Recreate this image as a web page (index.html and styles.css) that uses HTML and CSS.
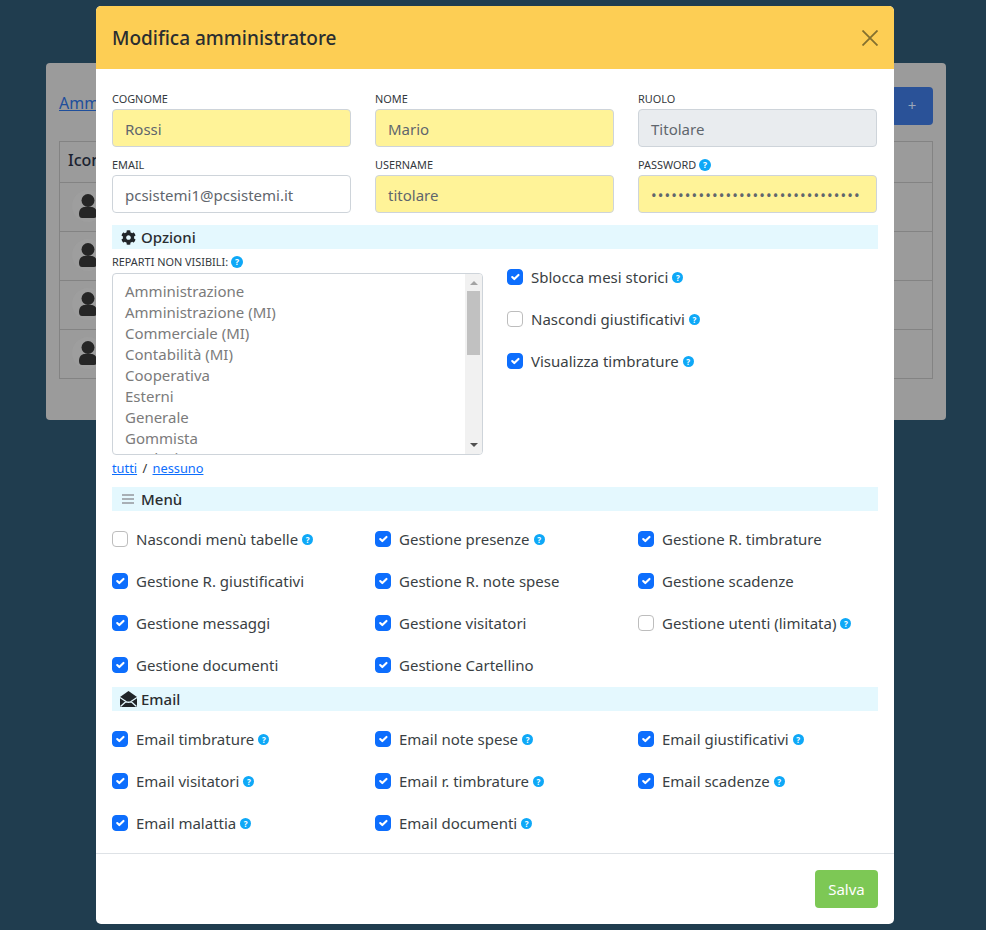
FILE: index.html
```html
<!DOCTYPE html>
<html lang="it">
<head>
<meta charset="utf-8">
<title>Modifica amministratore</title>
<link rel="stylesheet" href="styles.css">
</head>
<body>
<main class="card">
  <div class="card-top">
    <a class="crumb" href="#">Amministratori</a>
    <span class="add-btn">+</span>
  </div>
  <div class="table">
    <div class="tr th"><span>Icona</span></div>
    <div class="tr"><span class="avatar"><svg viewBox="0 0 18 24"><circle cx="9" cy="6.500" r="6.500"/><path d="M0 20c0-4.500 2.500-7 6-7h6c3.500 0 6 2.500 6 7 0 2.500-1 4-3 4H3c-2 0-3-1.500-3-4z"/></svg></span></div>
    <div class="tr"><span class="avatar"><svg viewBox="0 0 18 24"><circle cx="9" cy="6.500" r="6.500"/><path d="M0 20c0-4.500 2.500-7 6-7h6c3.500 0 6 2.500 6 7 0 2.500-1 4-3 4H3c-2 0-3-1.500-3-4z"/></svg></span></div>
    <div class="tr"><span class="avatar"><svg viewBox="0 0 18 24"><circle cx="9" cy="6.500" r="6.500"/><path d="M0 20c0-4.500 2.500-7 6-7h6c3.500 0 6 2.500 6 7 0 2.500-1 4-3 4H3c-2 0-3-1.500-3-4z"/></svg></span></div>
    <div class="tr"><span class="avatar"><svg viewBox="0 0 18 24"><circle cx="9" cy="6.500" r="6.500"/><path d="M0 20c0-4.500 2.500-7 6-7h6c3.500 0 6 2.500 6 7 0 2.500-1 4-3 4H3c-2 0-3-1.500-3-4z"/></svg></span></div>
  </div>
</main>

<section class="modal">
  <header class="modal-head">
    <h1>Modifica amministratore</h1>
    <svg class="close" viewBox="0 0 16 16"><path d="M0.500 0.500L15.500 15.500M15.500 0.500L0.500 15.500"/></svg>
  </header>
  <div class="modal-body">
    <div class="fields">
      <div class="field"><label>COGNOME</label><div class="input req">Rossi</div></div>
      <div class="field"><label>NOME</label><div class="input req">Mario</div></div>
      <div class="field"><label>RUOLO</label><div class="input off">Titolare</div></div>
      <div class="field"><label>EMAIL</label><div class="input">pcsistemi1@pcsistemi.it</div></div>
      <div class="field"><label>USERNAME</label><div class="input req">titolare</div></div>
      <div class="field"><label>PASSWORD <i class="help">?</i></label><div class="input req dots">•••••••••••••••••••••••••••••••</div></div>
    </div>

    <h2 class="bar"><svg class="bar-ico" viewBox="0 0 512 512"><path d="M487.4 315.7l-42.6-24.6c4.3-23.2 4.3-47 0-70.2l42.6-24.6c4.9-2.8 7.1-8.6 5.500-14-11.100-35.600-30-67.800-54.700-94.600-3.800-4.100-10-5.100-14.800-2.300L380.800 110c-17.900-15.400-38.500-27.300-60.800-35.100V25.800c0-5.600-3.900-10.500-9.400-11.700-36.700-8.200-74.300-7.800-109.200 0-5.500 1.200-9.400 6.100-9.400 11.700V75c-22.200 7.900-42.800 19.800-60.800 35.100L88.700 85.500c-4.900-2.800-11-1.900-14.800 2.300-24.700 26.700-43.600 58.900-54.700 94.600-1.700 5.400.6 11.200 5.500 14L67.300 221c-4.300 23.200-4.300 47 0 70.200l-42.600 24.600c-4.900 2.800-7.100 8.600-5.500 14 11.100 35.600 30 67.800 54.700 94.600 3.800 4.100 10 5.100 14.800 2.300l42.600-24.600c17.900 15.400 38.500 27.300 60.800 35.100v49.200c0 5.600 3.900 10.500 9.400 11.700 36.700 8.200 74.300 7.800 109.200 0 5.500-1.200 9.400-6.100 9.400-11.700v-49.200c22.200-7.900 42.800-19.800 60.800-35.100l42.600 24.600c4.900 2.800 11 1.900 14.800-2.300 24.700-26.700 43.600-58.900 54.700-94.600 1.500-5.500-.7-11.300-5.600-14.100zM256 336c-44.100 0-80-35.900-80-80s35.900-80 80-80 80 35.900 80 80-35.900 80-80 80z"/></svg>Opzioni</h2>

    <div class="options">
      <div class="opt-left">
        <label class="small">REPARTI NON VISIBILI: <i class="help">?</i></label>
        <div class="listbox">
          <ul>
            <li>Amministrazione</li>
            <li>Amministrazione (MI)</li>
            <li>Commerciale (MI)</li>
            <li>Contabilità (MI)</li>
            <li>Cooperativa</li>
            <li>Esterni</li>
            <li>Generale</li>
            <li>Gommista</li>
            <li>Produzione</li>
          </ul>
          <div class="scroll"><span class="arrow up"></span><span class="thumb"></span><span class="arrow down"></span></div>
        </div>
        <div class="links"><a href="#">tutti</a> / <a href="#">nessuno</a></div>
      </div>
      <div class="opt-right">
        <div class="check on">Sblocca mesi storici <i class="help">?</i></div>
        <div class="check">Nascondi giustificativi <i class="help">?</i></div>
        <div class="check on">Visualizza timbrature <i class="help">?</i></div>
      </div>
    </div>

    <h2 class="bar"><svg class="bar-ico bars" viewBox="0 0 12 10"><path d="M0 1h12M0 5h12M0 9h12"/></svg>Menù</h2>
    <div class="checks menu">
      <div class="check">Nascondi menù tabelle <i class="help">?</i></div>
      <div class="check on">Gestione presenze <i class="help">?</i></div>
      <div class="check on">Gestione R. timbrature</div>
      <div class="check on">Gestione R. giustificativi</div>
      <div class="check on">Gestione R. note spese</div>
      <div class="check on">Gestione scadenze</div>
      <div class="check on">Gestione messaggi</div>
      <div class="check on">Gestione visitatori</div>
      <div class="check">Gestione utenti (limitata) <i class="help">?</i></div>
      <div class="check on">Gestione documenti</div>
      <div class="check on">Gestione Cartellino</div>
    </div>

    <h2 class="bar"><svg class="bar-ico env" viewBox="0 0 17 16"><path d="M0 6L8.500 0L17 6V16H0z"/><path class="env-cut" d="M0 6.500L6 10.500Q8.500 12 11 10.500L17 6.500M0.500 15.500L6 10.500M16.500 15.500L11 10.500"/></svg>Email</h2>
    <div class="checks mail">
      <div class="check on">Email timbrature <i class="help">?</i></div>
      <div class="check on">Email note spese <i class="help">?</i></div>
      <div class="check on">Email giustificativi <i class="help">?</i></div>
      <div class="check on">Email visitatori <i class="help">?</i></div>
      <div class="check on">Email r. timbrature <i class="help">?</i></div>
      <div class="check on">Email scadenze <i class="help">?</i></div>
      <div class="check on">Email malattia <i class="help">?</i></div>
      <div class="check on">Email documenti <i class="help">?</i></div>
    </div>
  </div>
  <footer class="modal-foot"><span class="save">Salva</span></footer>
</section>
</body>
</html>
```

FILE: styles.css
```css
*, *::before { box-sizing: border-box; }
html, body { margin: 0; height: 930px; overflow: hidden; }
body {
  background: #203d4f;
  font-family: "Noto Sans", "Open Sans", sans-serif;
  color: #212529;
  padding: 63px 40px 0 46px;
}
.card {
  width: 900px;
  height: 357px;
  background: #9b9b9b;
  border-radius: 4px;
  padding: 24px 13px;
}
.card-top { display: flex; justify-content: space-between; height: 54px; }
.crumb { color: #1f4f9c; font-size: 16px; line-height: 32px; }
.add-btn {
  width: 42px; height: 38px; background: #2a5298; border-radius: 4px;
  color: #9aa6b8; text-align: center; line-height: 36px; font-size: 15px;
}
.table { border: 1px solid #838383; border-bottom: 0; }
.tr { height: 49px; border-bottom: 1px solid #838383; padding: 7px 12px; }
.th { height: 41px; padding: 7px 8px; font-weight: 500; font-size: 16px; color: #1a2230; }
.avatar {
  display: flex; align-items: center; justify-content: center;
  width: 32px; height: 32px; border-radius: 50%; background: #9e9e9e;
}
.avatar svg { display: block; width: 18px; height: 24px; fill: #262626; }

.modal {
  position: absolute;
  left: 96px; top: 6px;
  width: 798px; height: 918px;
  background: #fff;
  border-radius: 5px;
  overflow: hidden;
  display: flex;
  flex-direction: column;
}
.modal-head {
  height: 63px; background: #fdce54;
  display: flex; align-items: center; justify-content: space-between;
  padding: 0 16px;
}
.modal-head h1 { margin: 0; font-size: 19px; font-weight: 500; color: #2a2d30; }
.close { width: 16px; height: 16px; stroke: #83702f; stroke-width: 1.800; fill: none; }
.modal-body { flex: 1; padding: 21px 16px 0; }
.fields { display: grid; grid-template-columns: repeat(3, 239px); column-gap: 24px; row-gap: 9px; }
.field label, .small { display: block; height: 19px; font-size: 10.900px; line-height: 17px; color: #33383d; white-space: nowrap; }
.field .help, .small .help { width: 12px; height: 12px; line-height: 12px; font-size: 8.500px; }
.input {
  height: 38px; border: 1px solid #ced4da; border-radius: 4px;
  padding: 1px 12px 0; font-size: 15px; line-height: 36px; color: #5f666d;
}
.req { background: #fff398; }
.off { background: #e9ecef; }
.dots { letter-spacing: 1.130px; font-size: 15px; white-space: nowrap; overflow: hidden; }
.help {
  display: inline-block; width: 11px; height: 11px; border-radius: 50%;
  background: #0ea8f7; color: #fff; font: 700 8px/11px "Noto Sans", sans-serif;
  text-align: center; vertical-align: 1px;
}
.bar {
  display: flex; align-items: center;
  height: 24px; margin: 12px 0 0;
  width: 766px;
  background: #e4f8fe; padding-left: 9px;
  font-size: 15px; font-weight: 500; color: #2a2d30;
}
.bar-ico { width: 15px; height: 15px; margin-right: 5px; fill: #212529; flex: none; }
.bars { width: 12px; height: 10px; margin: 0 7px 0 1px; stroke: #a8afb5; stroke-width: 2; fill: none; }
.env { width: 17px; height: 16px; margin: 0 4px 0 -1px; }
.env-cut { fill: none; stroke: #e4f8fe; stroke-width: 1.300; }

.options { display: flex; height: 226px; }
.opt-left { width: 371px; padding-top: 4px; }
.opt-left .small { height: 20px; }
.listbox {
  display: flex; height: 182px; border: 1px solid #ced4da; border-radius: 4px; overflow: hidden;
}
.listbox ul {
  flex: 1; margin: 0; padding: 7px 12px; list-style: none;
  font-size: 15px; line-height: 21px; color: #7b7b7b; overflow: hidden;
}
.listbox li:last-child { margin-top: -1px; }
.scroll {
  width: 17px; background: #f1f1f1; display: flex; flex-direction: column; align-items: center;
}
.thumb { display: block; width: 13px; height: 64px; background: #c1c1c1; }
.arrow { display: block; width: 0; height: 0; border-left: 4px solid transparent; border-right: 4px solid transparent; }
.arrow.up { border-bottom: 4px solid #a3a3a3; margin: 7px 0 6px; }
.arrow.down { border-top: 4px solid #505050; margin-top: auto; margin-bottom: 7px; }
.links { font-size: 12.800px; line-height: 20px; margin-top: 3px; color: #333; word-spacing: 2px; }
.links a { color: #0d6efd; }
.opt-right { margin-left: 24px; padding-top: 7px; }
.opt-right .check { height: 42px; }

.check {
  display: flex; align-items: center; gap: 4px;
  height: 42px;
  font-size: 15px; color: #3a3f44; white-space: nowrap;
  padding-left: 24px; position: relative;
}
.check::before {
  content: ""; position: absolute; left: 0; top: 13px;
  width: 16px; height: 16px; border-radius: 4px; border: 1px solid #bdbdbd; background: #fff;
}
.check.on::before {
  border-color: #0d6efd;
  background: #0d6efd url("data:image/svg+xml,%3Csvg xmlns='http://www.w3.org/2000/svg' viewBox='0 0 20 20'%3E%3Cpath fill='none' stroke='%23fff' stroke-linecap='round' stroke-linejoin='round' stroke-width='3' d='M6 10l3 3l6-6'/%3E%3C/svg%3E") center/100% no-repeat;
}
.checks { display: grid; grid-template-columns: repeat(3, 239px); column-gap: 24px; }
.menu { margin-top: 7px; height: 168px; }
.bar + .mail { margin-top: 7px; }
.menu + .bar { margin-top: 1px; }

.modal-foot {
  height: 71px; border-top: 1px solid #dee2e6;
  display: flex; justify-content: flex-end; align-items: center; padding: 0 16px;
}
.save {
  width: 63px; height: 38px; background: #7dc855; border-radius: 4px;
  color: #fff; font-size: 15px; text-align: center; line-height: 38px;
}
```
